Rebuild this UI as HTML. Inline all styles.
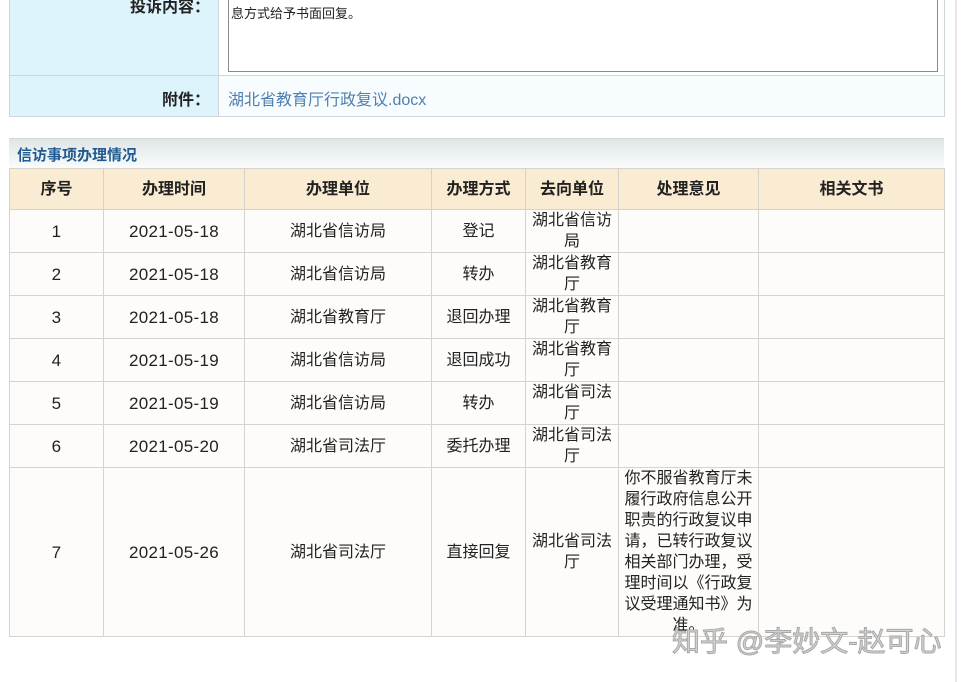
<!DOCTYPE html>
<html><head><meta charset="utf-8"><style>
body{margin:0;width:969px;height:682px;background:#fff;position:relative;overflow:hidden;font-family:"Liberation Sans","Microsoft YaHei","Noto Sans CJK SC",sans-serif;color:#222}
.a{position:absolute}
table{border-collapse:collapse;position:absolute;left:9px;top:168px;width:936px;font-size:16px;table-layout:fixed}
td,th{border:1px solid #d6d3cc;text-align:center;padding:0 3px;line-height:21px}
th{background:#faecd2;height:40px;font-weight:bold;color:#222}
td{background:#fdfcfa;height:42px}
.d{font-size:17px;letter-spacing:0.3px}
</style></head><body>
<div class="a" style="left:955px;top:0;width:2px;height:682px;background:#e6e6e6"></div>
<div class="a" style="left:9px;top:-2px;width:934px;height:117px;border:1px solid #cfd6da;background:#f7fcfe"></div>
<div class="a" style="left:10px;top:-2px;width:208px;height:118px;background:#def4fc;border-right:1px solid #cfd6da"></div>
<div class="a" style="left:9px;top:75px;width:935px;height:1px;background:#cfd6da"></div>
<div class="a" style="left:219px;top:-2px;width:725px;height:77px;background:#fff"></div>
<div class="a" style="left:228px;top:-5px;width:708px;height:75px;border:1px solid #8a8a8a;background:#fff"></div>
<div class="a" style="left:110px;top:-7px;width:100px;text-align:right;font-weight:bold;font-size:16px">投诉内容：</div>
<div class="a" style="left:231px;top:3px;font-size:13px">息方式给予书面回复。</div>
<div class="a" style="left:110px;top:86px;width:100px;text-align:right;font-weight:bold;font-size:16px">附件：</div>
<div class="a" style="left:228px;top:86px;font-size:16px;color:#4f7fae">湖北省教育厅行政复议.docx</div>
<div class="a" style="left:9px;top:138px;width:935px;height:30px;background:linear-gradient(#dfe6e6,#fbfcfc);border-top:1px solid #d0d8d8"></div>
<div class="a" style="left:17px;top:144px;font-size:15px;font-weight:bold;color:#1f5a91">信访事项办理情况</div>
<table>
<colgroup><col style="width:94px"><col style="width:141px"><col style="width:187px"><col style="width:94px"><col style="width:93px"><col style="width:140px"><col style="width:186px"></colgroup>
<tr><th>序号</th><th>办理时间</th><th>办理单位</th><th>办理方式</th><th>去向单位</th><th>处理意见</th><th>相关文书</th></tr>
<tr><td class="d">1</td><td class="d">2021-05-18</td><td>湖北省信访局</td><td>登记</td><td>湖北省信访局</td><td></td><td></td></tr>
<tr><td class="d">2</td><td class="d">2021-05-18</td><td>湖北省信访局</td><td>转办</td><td>湖北省教育厅</td><td></td><td></td></tr>
<tr><td class="d">3</td><td class="d">2021-05-18</td><td>湖北省教育厅</td><td>退回办理</td><td>湖北省教育厅</td><td></td><td></td></tr>
<tr><td class="d">4</td><td class="d">2021-05-19</td><td>湖北省信访局</td><td>退回成功</td><td>湖北省教育厅</td><td></td><td></td></tr>
<tr><td class="d">5</td><td class="d">2021-05-19</td><td>湖北省信访局</td><td>转办</td><td>湖北省司法厅</td><td></td><td></td></tr>
<tr><td class="d">6</td><td class="d">2021-05-20</td><td>湖北省司法厅</td><td>委托办理</td><td>湖北省司法厅</td><td></td><td></td></tr>
<tr><td class="d" style="height:168px">7</td><td class="d">2021-05-26</td><td>湖北省司法厅</td><td>直接回复</td><td>湖北省司法厅</td><td>你不服省教育厅未履行政府信息公开职责的行政复议申请，已转行政复议相关部门办理，受理时间以《行政复议受理通知书》为准。</td><td></td></tr>
</table>
<div class="a" style="left:672px;top:620px;font-size:28px;color:#d4d4d4;-webkit-text-stroke:1px #a8a8a8;white-space:nowrap">知乎 @李妙文-赵可心</div>
</body></html>
